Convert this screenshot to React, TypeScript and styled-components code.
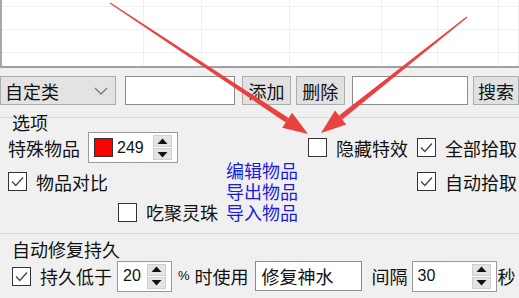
import React from "react";
import styled, { createGlobalStyle } from "styled-components";

const Global = createGlobalStyle`
  html, body {
    margin: 0;
    padding: 0;
    background: #f0f0f0;
  }
  body {
    font-family: "Noto Sans CJK SC", "Liberation Sans", sans-serif;
    color: #111;
  }
`;

const COLS = [142, 58, 88, 92, 56, 61];

type Pt = [number, number];

// tapered red arrow, shaft thin at the tail and thicker near the head
const arrowPoints = (from: Pt, to: Pt) => {
  const dx = to[0] - from[0];
  const dy = to[1] - from[1];
  const len = Math.hypot(dx, dy);
  const u: Pt = [dx / len, dy / len];
  const n: Pt = [-u[1], u[0]];
  const headLen = 25;
  const headW = 9;
  const base: Pt = [to[0] - u[0] * headLen, to[1] - u[1] * headLen];
  const p = (c: Pt, w: number): string =>
    `${(c[0] + n[0] * w).toFixed(1)},${(c[1] + n[1] * w).toFixed(1)}`;
  const shaft = [p(from, 0.6), p(base, 2.6), p(base, -2.6), p(from, -0.6)].join(" ");
  const head = [p(base, headW), `${to[0]},${to[1]}`, p(base, -headW)].join(" ");
  return { shaft, head };
};

const Arrows = () => {
  const a = arrowPoints([110, 3], [308, 134]);
  const b = arrowPoints([467, 17], [321, 133]);
  return (
    <ArrowLayer width={519} height={298} viewBox="0 0 519 298">
      {[a, b].map((x, i) => (
        <g key={i} fill="#e8413f">
          <polygon points={x.shaft} />
          <polygon points={x.head} />
        </g>
      ))}
    </ArrowLayer>
  );
};

const Check = ({ checked }: { checked?: boolean }) => (
  <Box>
    {checked && (
      <svg width="17" height="17" viewBox="0 0 17 17">
        <polyline
          points="3,8.5 6.8,12.5 14,4.5"
          fill="none"
          stroke="#4a4a4a"
          strokeWidth="1.4"
        />
      </svg>
    )}
  </Box>
);

const Updown = () => (
  <ArrowPair>
    <ArrowHalf>
      <svg width="11" height="7" viewBox="0 0 11 7">
        <polygon points="5.5,0.5 10.5,6 0.5,6" fill="#111" />
      </svg>
    </ArrowHalf>
    <ArrowHalf>
      <svg width="11" height="7" viewBox="0 0 11 7">
        <polygon points="0.5,1 10.5,1 5.5,6.5" fill="#111" />
      </svg>
    </ArrowHalf>
  </ArrowPair>
);

const CheckItem = ({
  label,
  checked,
  $ml,
}: {
  label: string;
  checked?: boolean;
  $ml?: number;
}) => (
  <CheckRow $ml={$ml}>
    <Check checked={checked} />
    <span>{label}</span>
  </CheckRow>
);

export default function App() {
  return (
    <Page>
      <Global />
      <ListView>
        {[7, 23, 23, 14].map((h, r) =>
          [...COLS, 0].map((w, c) => (
            <Cell key={`${r}-${c}`} style={{ height: h }} />
          ))
        )}
      </ListView>

      <Toolbar>
        <Combo>
          <span>自定类</span>
          <svg width="14" height="8" viewBox="0 0 14 8">
            <polyline points="1,1 7,7 13,1" fill="none" stroke="#777" strokeWidth="1.3" />
          </svg>
        </Combo>
        <TextBox $w={111} $ml={9} />
        <Button $w={49} $ml={7}>添加</Button>
        <Button $w={49} $ml={5}>删除</Button>
        <TextBox $w={117} $ml={7} />
        <Button $w={46} $ml={5}>搜索</Button>
      </Toolbar>

      <Group $mt={12}>
        <GroupTitle $mt={-6}>选项</GroupTitle>
        <OptionsGrid>
          <LeftCell $ml={8}>
            <span>特殊物品</span>
            <Spin $w={90} $ml={8}>
              <Swatch />
              <Num>249</Num>
              <Updown />
            </Spin>
          </LeftCell>
          <MidCell>
            <CheckItem label="隐藏特效" />
          </MidCell>
          <RightCell>
            <CheckItem label="全部拾取" checked />
          </RightCell>

          <LeftCell $ml={8}>
            <CheckItem label="物品对比" checked />
          </LeftCell>
          <Links>
            <LinkLine>编辑物品</LinkLine>
            <LinkLine>导出物品</LinkLine>
            <LinkLine>导入物品</LinkLine>
          </Links>
          <RightCell>
            <CheckItem label="自动拾取" checked />
          </RightCell>

          <LeftCell $ml={118}>
            <CheckItem label="吃聚灵珠" />
          </LeftCell>
        </OptionsGrid>
      </Group>

      <Group $mt={9}>
        <GroupTitle $mt={5} $ml={12}>自动修复持久</GroupTitle>
        <RepairRow>
          <CheckItem label="持久低于" checked $ml={12} />
          <Spin $w={55} $ml={5}>
            <Num>20</Num>
            <Updown />
          </Spin>
          <Percent>%</Percent>
          <Label $ml={5}>时使用</Label>
          <TextBox $w={107} $ml={6} $h={30}>
            <span>修复神水</span>
          </TextBox>
          <Label $ml={10}>间隔</Label>
          <Spin $w={85} $ml={4}>
            <Num>30</Num>
            <Updown />
          </Spin>
          <Label $ml={1}>秒</Label>
        </RepairRow>
      </Group>

      <Arrows />
    </Page>
  );
}

const Page = styled.div`
  position: relative;
  width: 519px;
  height: 298px;
  overflow: hidden;
  background: #f0f0f0;
  font-size: 18px;
  line-height: 20px;
`;

const ListView = styled.div`
  display: grid;
  grid-template-columns: ${COLS.map((c) => c + "px").join(" ")} 1fr;
  background: #fff;
  border-left: 2px solid #a8a8a8;
  border-bottom: 2px solid #a0a0a0;
  box-sizing: border-box;
  height: 68px;
  overflow: hidden;
`;

const Cell = styled.div`
  box-sizing: border-box;
  border-right: 1px solid #efefef;
  border-bottom: 1px solid #efefef;
`;

const Toolbar = styled.div`
  display: flex;
  align-items: center;
  height: 29px;
  margin-top: 8px;
`;

const Combo = styled.div`
  box-sizing: border-box;
  width: 116px;
  height: 29px;
  display: flex;
  align-items: center;
  justify-content: space-between;
  padding: 0 7px 0 4px;
  background: #e3e3e3;
  border: 1px solid #adadad;
`;

const TextBox = styled.div<{ $w: number; $ml?: number; $h?: number }>`
  box-sizing: border-box;
  width: ${(p) => p.$w}px;
  height: ${(p) => p.$h ?? 29}px;
  margin-left: ${(p) => p.$ml ?? 0}px;
  background: #fff;
  border: 1px solid #8c8c8c;
  display: flex;
  align-items: center;
  padding-left: 6px;
`;

const Button = styled.div<{ $w: number; $ml?: number }>`
  box-sizing: border-box;
  width: ${(p) => p.$w}px;
  height: 29px;
  margin-left: ${(p) => p.$ml ?? 0}px;
  display: flex;
  align-items: center;
  justify-content: center;
  background: #e1e1e1;
  border: 1px solid #adadad;
`;

const Group = styled.div<{ $mt: number }>`
  margin-top: ${(p) => p.$mt}px;
  border-top: 1px solid #dadada;
`;

const GroupTitle = styled.div<{ $mt: number; $ml?: number }>`
  margin-top: ${(p) => p.$mt}px;
  margin-left: ${(p) => p.$ml ?? 12}px;
  height: 20px;
`;

const OptionsGrid = styled.div`
  display: grid;
  grid-template-columns: 226px 82px 109px 1fr;
  grid-template-rows: 31px 37px 24px;
`;

const LeftCell = styled.div<{ $ml: number }>`
  grid-column: 1;
  display: flex;
  align-items: center;
  padding-left: ${(p) => p.$ml}px;
`;

const MidCell = styled.div`
  grid-column: 3;
  display: flex;
  align-items: center;
`;

const RightCell = styled.div`
  grid-column: 4;
  display: flex;
  align-items: center;
`;

const Links = styled.div`
  grid-column: 2;
  grid-row: 2 / span 2;
  align-self: start;
  margin-top: -3px;
  display: flex;
  flex-direction: column;
`;

const LinkLine = styled.span`
  display: block;
  height: 21px;
  line-height: 21px;
  color: #1c1ce0;
  cursor: pointer;
`;

const CheckRow = styled.label<{ $ml?: number }>`
  display: flex;
  align-items: center;
  gap: 9px;
  margin-left: ${(p) => p.$ml ?? 0}px;
`;

const Box = styled.span`
  box-sizing: border-box;
  width: 19px;
  height: 19px;
  border: 1px solid #333;
  background: #fff;
  display: flex;
  align-items: center;
  justify-content: center;
`;

const Spin = styled.div<{ $w: number; $ml: number }>`
  box-sizing: border-box;
  width: ${(p) => p.$w}px;
  height: 31px;
  margin-left: ${(p) => p.$ml}px;
  display: flex;
  align-items: center;
  padding: 0 5px 0 5px;
  gap: 4px;
  background: #fff;
  border: 1px solid #9a9a9a;
`;

const Swatch = styled.span`
  box-sizing: border-box;
  width: 19px;
  height: 19px;
  background: #f00;
  border: 1px solid #333;
`;

const Num = styled.span`
  flex: 1;
  font-family: "Liberation Sans", Arial, sans-serif;
  font-size: 16px;
`;

const ArrowPair = styled.span`
  display: flex;
  flex-direction: column;
  gap: 1px;
  width: 19px;
`;

const ArrowHalf = styled.span`
  box-sizing: border-box;
  height: 12px;
  display: flex;
  align-items: center;
  justify-content: center;
  background: #e4e4e4;
  border: 1px solid #cfcfcf;
`;

const RepairRow = styled.div`
  display: flex;
  align-items: center;
  height: 30px;
  margin-top: 2px;
`;

const Percent = styled.span`
  margin-left: 6px;
  font-size: 13px;
  font-family: "Liberation Sans", Arial, sans-serif;
`;

const Label = styled.span<{ $ml: number }>`
  margin-left: ${(p) => p.$ml}px;
`;

const ArrowLayer = styled.svg`
  position: absolute;
  left: 0;
  top: 0;
  pointer-events: none;
`;
